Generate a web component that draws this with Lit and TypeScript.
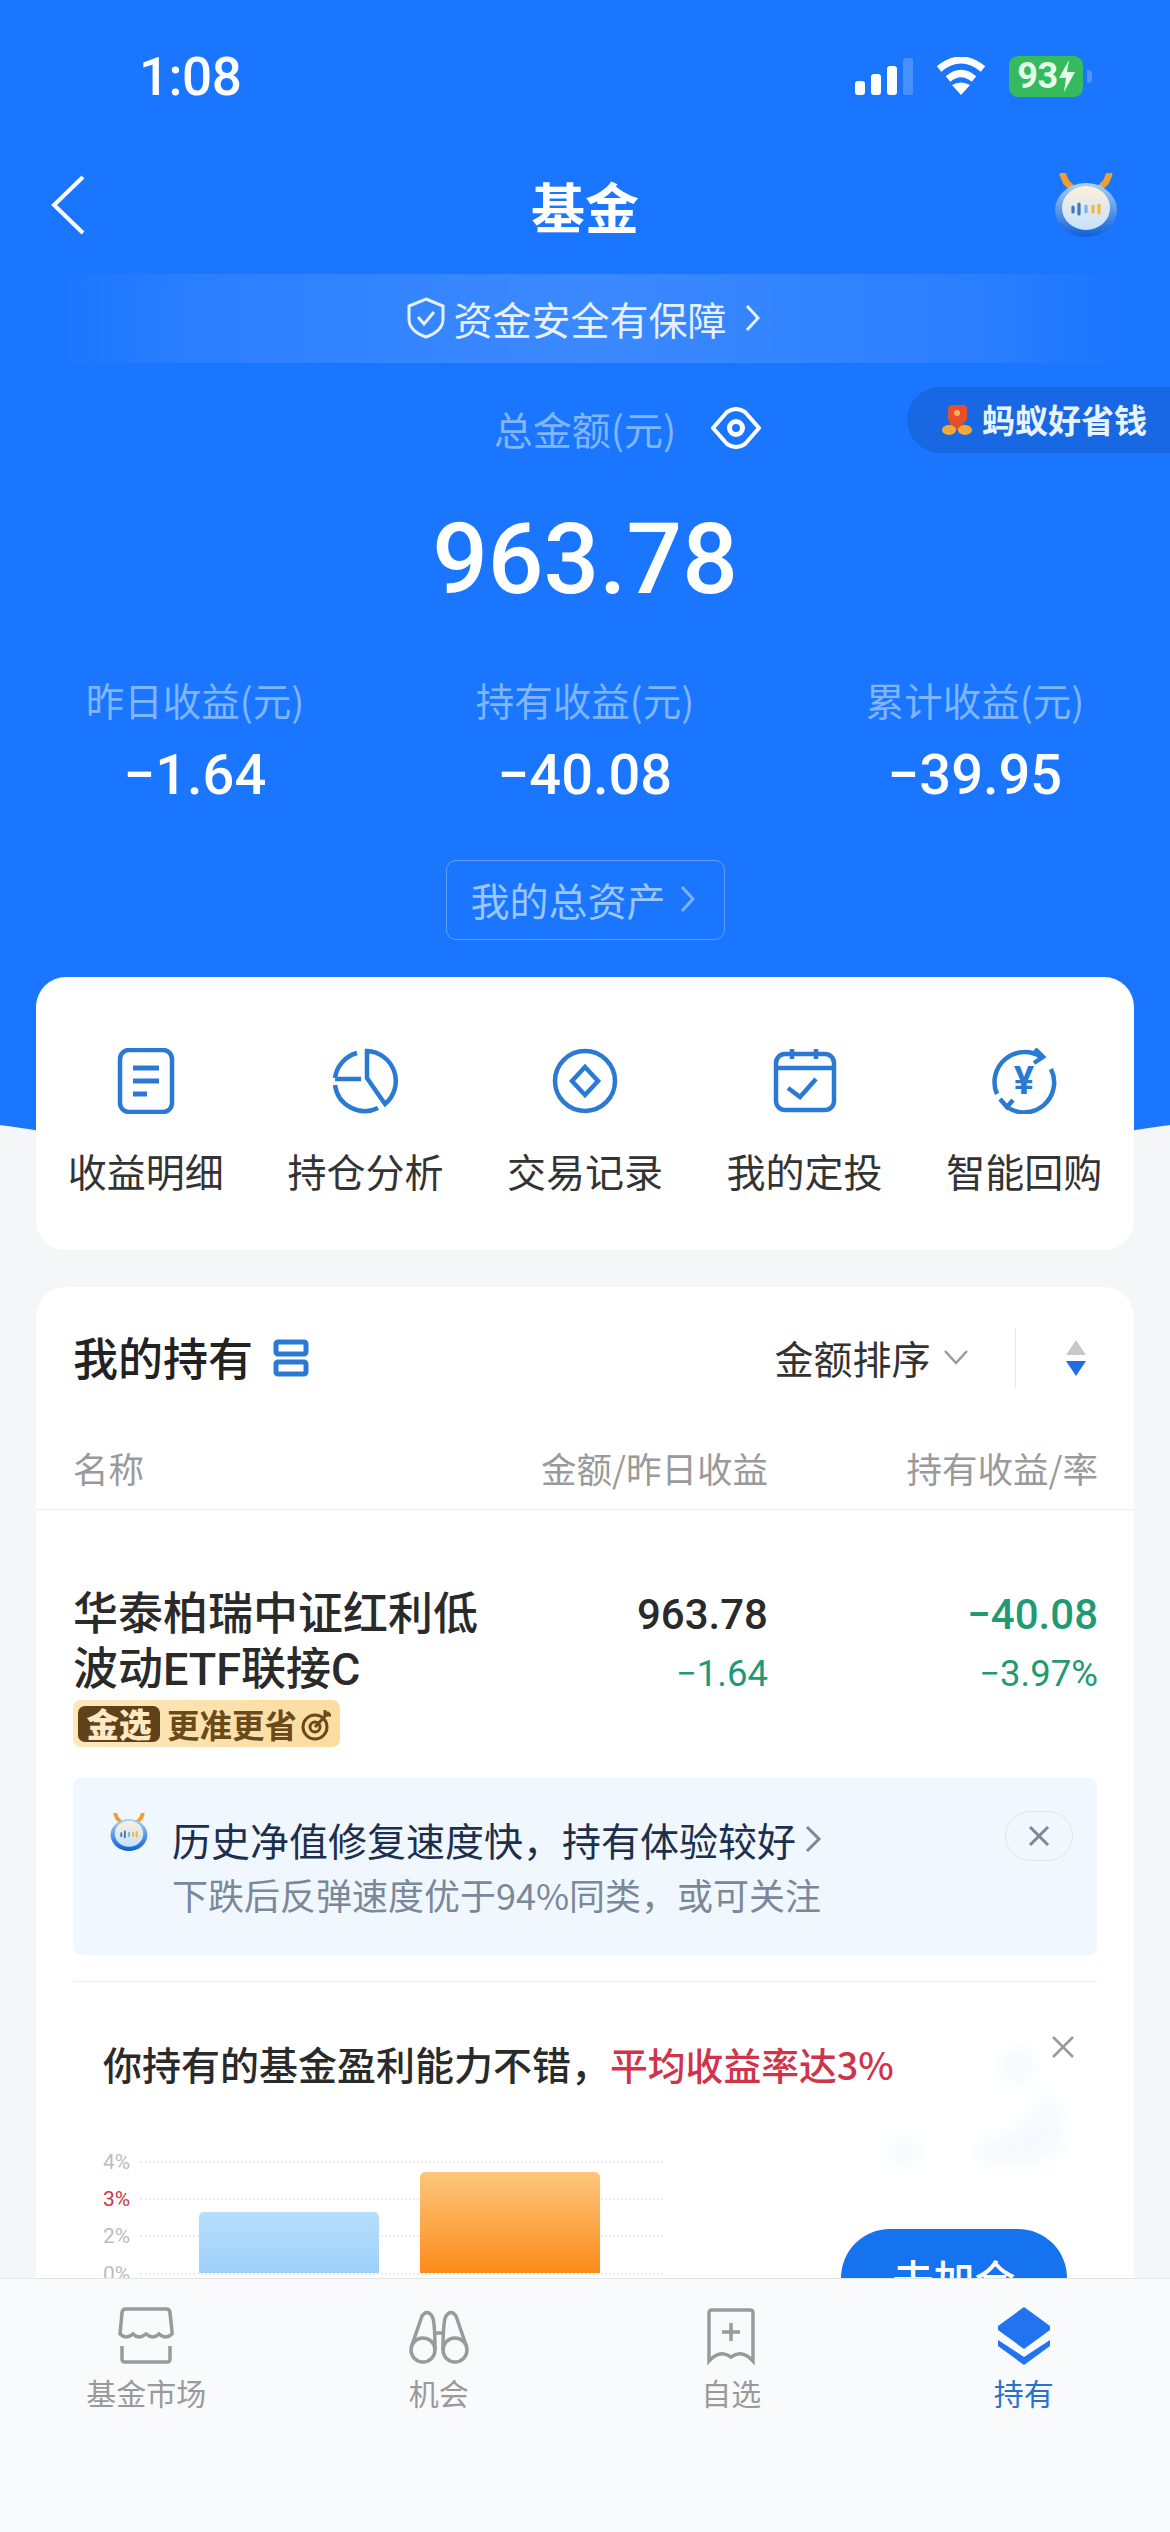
import { LitElement, css, html, svg } from "lit";
import { customElement } from "lit/decorators.js";

const robot = (size: number) => html`<svg width=${size} height=${size} viewBox="0 0 64 64">
  <defs>
    <linearGradient id="rb" x1="0" y1="0" x2="0" y2="1">
      <stop offset="0" stop-color="#a9d4f8" /><stop offset="1" stop-color="#0d5fd6" />
    </linearGradient>
    <linearGradient id="rf" x1="0" y1="0" x2="0" y2="1">
      <stop offset="0" stop-color="#fdf0dc" /><stop offset="1" stop-color="#c5e2fb" />
    </linearGradient>
  </defs>
  <path d="M9 2L12 9L19 16M55 2L52 9L45 16" fill="none" stroke="#f0a030" stroke-width="6.5" stroke-linecap="round" />
  <ellipse cx="32" cy="37" rx="31" ry="27" fill="url(#rb)" />
  <ellipse cx="32" cy="35" rx="24" ry="22" fill="url(#rf)" />
  <g stroke-width="3.2" stroke-linecap="round">
    <path d="M19 34v5M25 31v10" stroke="#3a78c8" />
    <path d="M32 33v6" stroke="#7ab4e6" />
    <path d="M39 33v6M45 32v8" stroke="#f0b648" />
  </g>
</svg>`;

const featureIcons = [
  svg`<rect x="7" y="2" width="52" height="62" rx="9" /><path d="M20 20h26M20 33h26M20 46h14" stroke-width="5" />`,
  svg`<path d="M35 3A30 30 0 0 1 53 56L35 30Z" /><path d="M3 30A30 30 0 0 1 25 5M3 31H29" /><path d="M3 37A30 30 0 0 0 46 60" />`,
  svg`<circle cx="33" cy="33" r="30" /><path d="M33 19L46 33L33 47L20 33Z" />`,
  svg`<rect x="4" y="6" width="58" height="56" rx="9" /><path d="M4 20H62M20 1V11M44 1V11M16 40L28 49L44 31" />`,
  svg`<path d="M50 9A30 30 0 0 0 6 46M16 59A30 30 0 0 0 60 21" /><path d="M44 1L52 9L43 15M9 51L16 59L22 52" /><text x="33" y="46" text-anchor="middle" font-size="38" font-weight="700" fill="#2a7ad3" stroke="none" font-family="Roboto, sans-serif">¥</text>`,
];
const features = ["收益明细", "持仓分析", "交易记录", "我的定投", "智能回购"];

const tabIcons = [
  html`<svg width="56" height="58" viewBox="0 0 56 58"><path d="M8 2H48Q52 2 52 6L54 24Q54 27 54 27Q48 33 41 27Q35 33 28 27Q21 33 15 27Q8 33 2 27L4 6Q4 2 8 2Z" /><path d="M4 39V52Q4 55 7 55H49Q52 55 52 52V39" /></svg>`,
  html`<svg width="60" height="58" viewBox="0 0 60 58"><circle cx="14" cy="43" r="12" /><circle cx="46" cy="43" r="12" /><path d="M3 38L13 9Q18 2 23 9Q26 14 26 43M57 38L47 9Q42 2 37 9Q34 14 34 43M26 26H34" /></svg>`,
  html`<svg width="50" height="58" viewBox="0 0 50 58"><path d="M6 3H44Q47 3 47 6V54Q36 42 25 50Q14 42 3 54V6Q3 3 6 3Z" /><path d="M25 16V34M16 25H34" /></svg>`,
  html`<svg width="52" height="58" viewBox="0 0 52 58" style="stroke:none"><path d="M26 0L52 19V23L26 42L0 23V19Z" fill="#2273f0" /><path d="M0 33L26 50L52 33V39L26 58L0 39Z" fill="#2273f0" /></svg>`,
];
const tabs = ["基金市场", "机会", "自选", "持有"];

@customElement("app-root")
export class AppRoot extends LitElement {
  static styles = css`
    :host {
      display: block;
      position: relative;
      width: 1170px;
      height: 2532px;
      overflow: hidden;
      background: #f5f6f7;
      font-family: "Noto Sans CJK SC", Roboto, sans-serif;
      color: #333;
    }
    .num {
      font-family: Roboto, "Noto Sans CJK SC", sans-serif;
    }
    .hero-bg {
      position: absolute;
      top: 0;
      left: -234px;
      width: 1638px;
      height: 1163px;
      background: #1a75ff;
      border-radius: 0 0 819px 819px / 0 0 127px 127px;
    }
    .page {
      position: relative;
    }
    .status {
      height: 152px;
      display: flex;
      align-items: center;
      justify-content: space-between;
      padding: 0 87px 0 139px;
      color: #fff;
    }
    .time {
      font-size: 53px;
      font-weight: 500;
      letter-spacing: -0.5px;
      margin-top: 2px;
    }
    .status-icons {
      display: flex;
      align-items: center;
      gap: 23px;
    }
    .battery {
      position: relative;
      width: 74px;
      height: 41px;
      background: #35bb5e;
      border-radius: 9px;
      display: flex;
      align-items: center;
      justify-content: center;
      gap: 1px;
      font-size: 36px;
      font-weight: 700;
      letter-spacing: -0.5px;
      color: #e6ffe9;
    }
    .battery::after {
      content: "";
      position: absolute;
      left: 78px;
      top: 14px;
      width: 5px;
      height: 13px;
      border-radius: 0 4px 4px 0;
      background: #4f95f9;
    }
    .nav {
      height: 106px;
      display: flex;
      align-items: center;
      justify-content: space-between;
      padding: 0 52px 0 50px;
      position: relative;
    }
    .nav-title {
      position: absolute;
      left: 0;
      right: 0;
      text-align: center;
      font-size: 54px;
      font-weight: 700;
      color: #fff;
    }
    .nav-robot {
      display: flex;
    }
    .guard {
      margin-top: 16px;
      height: 89px;
      box-sizing: border-box;
      padding-bottom: 2px;
      display: flex;
      align-items: center;
      justify-content: center;
      gap: 8px;
      color: #e6f0ff;
      font-size: 39px;
      background: linear-gradient(90deg, rgba(255, 255, 255, 0) 4%, rgba(255, 255, 255, 0.07) 16%, rgba(255, 255, 255, 0.15) 50%, rgba(255, 255, 255, 0.07) 84%, rgba(255, 255, 255, 0) 97%);
    }
    .save-tag {
      position: absolute;
      top: 387px;
      right: 0;
      width: 263px;
      height: 66px;
      box-sizing: border-box;
      padding: 0 0 2px 35px;
      display: flex;
      align-items: center;
      gap: 10px;
      border-radius: 33px 0 0 33px;
      background: #1868e4;
      color: #e9f3ff;
      font-size: 33px;
      font-weight: 700;
    }
    .summary {
      padding-top: 42px;
      text-align: center;
    }
    .total-label {
      height: 45px;
      display: flex;
      align-items: center;
      justify-content: center;
      gap: 34px;
      font-size: 39px;
      color: #80b6ff;
      padding-left: 86px;
    }
    .total {
      margin-top: 55px;
      height: 110px;
      line-height: 110px;
      font-size: 98px;
      font-weight: 500;
      color: #fff;
    }
    .stats {
      margin-top: 64px;
      display: grid;
      grid-template-columns: 390px 390px 390px;
    }
    .stat-label {
      height: 40px;
      line-height: 40px;
      font-size: 38.5px;
      color: #80b6ff;
    }
    .stat-value {
      margin-top: 23px;
      height: 66px;
      line-height: 66px;
      font-size: 56px;
      font-weight: 500;
      color: #fff;
    }
    .assets {
      margin: 52px auto 0;
      width: 279px;
      height: 80px;
      box-sizing: border-box;
      border: 1.5px solid rgba(255, 255, 255, 0.3);
      border-radius: 10px;
      display: flex;
      align-items: center;
      justify-content: center;
      gap: 14px;
      padding: 0 4px 2px 0;
      font-size: 39px;
      color: #9cc6ff;
    }
    .card {
      margin: 37px 36px 0;
      background: #fff;
      border-radius: 30px;
    }
    .features {
      height: 273px;
      box-sizing: border-box;
      padding-top: 71px;
      display: grid;
      grid-template-columns: repeat(5, 1fr);
    }
    .feature {
      display: flex;
      flex-direction: column;
      align-items: center;
      font-size: 39px;
      color: #333;
    }
    .feature svg {
      fill: none;
      stroke: #2a7ad3;
      stroke-width: 4.5;
    }
    .feature span {
      margin-top: 34px;
      line-height: 44px;
    }
    .holdings-head {
      height: 142px;
      display: flex;
      align-items: center;
      padding: 0 46px 0 37px;
    }
    .holdings-title {
      font-size: 45px;
      font-weight: 500;
      color: #222;
      margin: 0 20px 4px 0;
    }
    .sort {
      margin-left: auto;
      display: flex;
      align-items: center;
      gap: 12px;
      padding-bottom: 3px;
      font-size: 39px;
      color: #333;
    }
    .sort-divider {
      width: 1.5px;
      height: 60px;
      background: #e8e8e8;
      margin: 0 48px 0 46px;
    }
    .columns,
    .row {
      display: grid;
      grid-template-columns: minmax(0, 1fr) 300px 330px;
      padding: 0 36px 0 37px;
    }
    .columns {
      height: 80px;
      align-items: center;
      border-bottom: 1.5px solid #eeeeee;
      font-size: 35.5px;
      color: #9a9a9a;
    }
    .columns div {
      padding-bottom: 4px;
    }
    .columns div:not(:first-child),
    .cell {
      text-align: right;
    }
    .row {
      padding-top: 77px;
    }
    .name {
      font-family: Roboto, "Noto Sans CJK SC", sans-serif;
      font-size: 45px;
      line-height: 55px;
      font-weight: 500;
      color: #2a2a2a;
      white-space: nowrap;
    }
    .cell-main {
      font-size: 42px;
      font-weight: 500;
      line-height: 55px;
      color: #2a2a2a;
    }
    .cell-sub {
      margin-top: 8px;
      font-size: 36.5px;
      line-height: 47px;
      color: #1f9a74;
    }
    .green {
      color: #1f9a74;
    }
    .gold {
      margin: 3px 0 0 37px;
      width: 267px;
      height: 47px;
      box-sizing: border-box;
      padding-left: 5px;
      display: flex;
      align-items: center;
      border-radius: 8px;
      background: linear-gradient(90deg, #fde7bb, #fbdca0);
      font-size: 32.5px;
      font-weight: 700;
      color: #6b4a1a;
      white-space: nowrap;
    }
    .gold b {
      width: 82px;
      height: 36px;
      line-height: 34px;
      text-align: center;
      margin-right: 7px;
      font-size: 32.5px;
      background: #5f421a;
      color: #ffe9c4;
      border-radius: 7px;
    }
    .gold svg {
      margin-left: 4px;
    }
    .tip {
      margin: 31px 37px 0;
      height: 177px;
      box-sizing: border-box;
      padding: 35px 24px 0 37px;
      display: flex;
      gap: 24px;
      background: #f0f7fe;
      border-radius: 8px;
    }
    .tip-title {
      display: flex;
      align-items: center;
      gap: 8px;
      font-size: 39px;
      line-height: 52px;
      color: #1c2f4d;
    }
    .tip-sub {
      margin-top: 7px;
      font-size: 36px;
      line-height: 44px;
      color: #7b8899;
    }
    .tip-close {
      margin-left: auto;
      width: 68px;
      height: 50px;
      margin-top: -2px;
      box-sizing: border-box;
      border: 1.5px solid #dde6ee;
      border-radius: 25px;
      display: flex;
      align-items: center;
      justify-content: center;
    }
    .promo {
      position: relative;
      margin: 26px 37px 0;
      padding: 56px 30px 0;
      border-top: 1.5px solid #eeeeee;
    }
    .promo-title {
      position: relative;
      font-size: 39px;
      line-height: 50px;
      font-weight: 500;
      color: #2a2a2a;
      white-space: nowrap;
    }
    .red {
      color: #d0344a;
    }
    .promo-title .red {
      font-size: 37.8px;
    }
    .promo-x {
      position: absolute;
      top: 53px;
      right: 22px;
    }
    .promo-art {
      position: absolute;
      top: 60px;
      right: 10px;
    }
    .promo-body {
      position: relative;
      margin-top: 54px;
      display: flex;
      justify-content: space-between;
    }
    .chart {
      width: 560px;
    }
    .plot {
      position: relative;
    }
    .grid-row {
      height: 37.3px;
      display: flex;
      align-items: center;
      gap: 10px;
      font-size: 21px;
      color: #bdbdbd;
    }
    .grid-row i {
      flex: 1;
      border-top: 2px dotted #ececec;
    }
    .bars {
      position: absolute;
      left: 96px;
      bottom: 19px;
      display: flex;
      align-items: flex-end;
      gap: 41px;
    }
    .bar {
      width: 180px;
      border-radius: 5px 5px 0 0;
    }
    .bar-a {
      height: 61px;
      background: linear-gradient(#b6defc, #9fd0fa);
    }
    .bar-b {
      height: 101px;
      background: linear-gradient(#fdc67c, #fc8c1a);
    }
    .bar-labels {
      display: flex;
      gap: 41px;
      margin: -20px 0 0 96px;
      font-size: 26px;
      color: #888;
      text-align: center;
    }
    .bar-labels span {
      width: 180px;
    }
    .go {
      margin: 86px 0 0;
      width: 226px;
      height: 98px;
      border-radius: 49px;
      background: #1673f0;
      color: #fff;
      font-size: 41px;
      font-weight: 500;
      text-align: center;
      line-height: 96px;
    }
    .tabbar {
      position: absolute;
      left: 0;
      right: 0;
      bottom: 0;
      height: 254px;
      box-sizing: border-box;
      padding-top: 28px;
      display: grid;
      grid-template-columns: repeat(4, 1fr);
      align-items: start;
      background: #f9fafc;
      border-top: 1.5px solid #e4e4e4;
    }
    .tab {
      display: flex;
      flex-direction: column;
      align-items: center;
      font-size: 30px;
      color: #9a9a9a;
    }
    .tab svg {
      fill: none;
      stroke: #9a9a9a;
      stroke-width: 3.5;
    }
    .tab span {
      margin-top: 7px;
      line-height: 40px;
    }
    .tab.active {
      color: #2a72c8;
    }
  `;

  render() {
    return html`
      <div class="hero-bg"></div>
      <div class="page">
        <div class="status">
          <span class="time num">1:08</span>
          <div class="status-icons">
            <svg width="58" height="37" viewBox="0 0 58 37" fill="#fff">
              <rect x="0" y="23" width="10" height="14" rx="3" />
              <rect x="16" y="16" width="10" height="21" rx="3" />
              <rect x="32" y="8" width="10" height="29" rx="3" />
              <rect x="48" y="0" width="10" height="37" rx="2" opacity=".2" />
            </svg>
            <svg width="50" height="38" viewBox="0 0 50 38" fill="none" stroke="#fff" stroke-width="7">
              <path d="M3 12Q25 -6 47 12" />
              <path d="M12 22Q25 11 38 22" />
              <path d="M25 38L16 28Q25 23 34 28Z" fill="#fff" stroke="none" />
            </svg>
            <div class="battery num">93<svg width="16" height="32" viewBox="0 0 16 32"><path d="M10 0L0 18H7L5 32L16 12H8Z" fill="#e6ffe9" /></svg></div>
          </div>
        </div>
        <div class="nav">
          <svg width="36" height="60" viewBox="0 0 36 60" fill="none" stroke="#fff" stroke-width="4"><path d="M33 2L4 30L33 58" /></svg>
          <div class="nav-title">基金</div>
          <div class="nav-robot">${robot(64)}</div>
        </div>
        <div class="guard">
          <svg width="38" height="42" viewBox="0 0 38 42" fill="none" stroke="#e6f0ff" stroke-width="3"><path d="M19 2L36 9V22Q36 34 19 40Q2 34 2 22V9Z" /><path d="M11 20L17 27L27 15" /></svg>
          <span>资金安全有保障</span>
          <svg width="20" height="30" viewBox="0 0 20 30" fill="none" stroke="#e6f0ff" stroke-width="3" style="margin-left:8px"><path d="M4 3L15 15L4 27" /></svg>
        </div>
        <div class="save-tag">
          <svg width="30" height="32" viewBox="0 0 30 32">
            <path d="M8 18H22V27H8Z" fill="#d9502a" />
            <rect x="6" y="2" width="19" height="17" rx="4" fill="#e8502c" />
            <circle cx="15" cy="10" r="3" fill="#ffb35a" />
            <ellipse cx="7" cy="27" rx="7" ry="5" fill="#f3a83a" />
            <ellipse cx="23" cy="27" rx="7" ry="5" fill="#f3a83a" />
          </svg>
          <span>蚂蚁好省钱</span>
        </div>
        <div class="summary">
          <div class="total-label">
            <span>总金额(元)</span>
            <svg width="52" height="42" viewBox="0 0 52 42" fill="none" stroke="#fff" stroke-width="4"><path d="M3 21L17 5Q26 -1 35 5L49 21L35 37Q26 43 17 37Z" stroke-linejoin="round" /><circle cx="26" cy="21" r="6.5" stroke-width="5" /></svg>
          </div>
          <div class="total num">963.78</div>
          <div class="stats">
            <div><div class="stat-label">昨日收益(元)</div><div class="stat-value num">−1.64</div></div>
            <div><div class="stat-label">持有收益(元)</div><div class="stat-value num">−40.08</div></div>
            <div><div class="stat-label">累计收益(元)</div><div class="stat-value num">−39.95</div></div>
          </div>
          <div class="assets">
            <span>我的总资产</span>
            <svg width="16" height="28" viewBox="0 0 16 28" fill="none" stroke="#7fb2fb" stroke-width="3"><path d="M2 2L13 14L2 26" /></svg>
          </div>
        </div>
        <div class="card features">
          ${features.map(
            (f, i) => html`<div class="feature">
              <svg width="66" height="66" viewBox="0 0 66 66">${featureIcons[i]}</svg>
              <span>${f}</span>
            </div>`
          )}
        </div>
        <div class="card">
          <div class="holdings-head">
            <span class="holdings-title">我的持有</span>
            <svg width="36" height="38" viewBox="0 0 36 38" fill="none" stroke="#2a7ad3" stroke-width="5"><rect x="3" y="3" width="30" height="12" rx="2" /><rect x="3" y="23" width="30" height="12" rx="2" /></svg>
            <div class="sort">
              <span>金额排序</span>
              <svg width="26" height="16" viewBox="0 0 26 16" fill="none" stroke="#999" stroke-width="2.5"><path d="M2 2L13 14L24 2" /></svg>
            </div>
            <div class="sort-divider"></div>
            <svg width="24" height="40" viewBox="0 0 24 40"><path d="M12 2L22 17H2Z" fill="#c8c8c8" /><path d="M12 38L22 23H2Z" fill="#1f6fe0" /></svg>
          </div>
          <div class="columns">
            <div>名称</div>
            <div>金额/昨日收益</div>
            <div>持有收益/率</div>
          </div>
          <div class="row">
            <div class="name">华泰柏瑞中证红利低<br />波动ETF联接C</div>
            <div class="cell num">
              <div class="cell-main">963.78</div>
              <div class="cell-sub">−1.64</div>
            </div>
            <div class="cell num">
              <div class="cell-main green">−40.08</div>
              <div class="cell-sub">−3.97%</div>
            </div>
          </div>
          <div class="gold">
            <b>金选</b>更准更省
            <svg width="32" height="34" viewBox="0 0 32 34" fill="none" stroke="#6b4a1a" stroke-width="3"><circle cx="14" cy="20" r="12" /><circle cx="14" cy="20" r="5" /><path d="M14 20L28 5M24 3V8H30" /></svg>
          </div>
          <div class="tip">
            ${robot(38)}
            <div>
              <div class="tip-title">
                历史净值修复速度快，持有体验较好
                <svg width="18" height="30" viewBox="0 0 18 30" fill="none" stroke="#7b8899" stroke-width="3"><path d="M3 3L15 15L3 27" /></svg>
              </div>
              <div class="tip-sub">下跌后反弹速度优于94%同类，或可关注</div>
            </div>
            <div class="tip-close">
              <svg width="24" height="24" viewBox="0 0 24 24" stroke="#7b8899" stroke-width="3"><path d="M3 3L21 21M21 3L3 21" /></svg>
            </div>
          </div>
          <div class="promo">
            <svg class="promo-art" width="240" height="170" viewBox="0 0 240 170" fill="#f5f9fd">
              <defs><filter id="soft"><feGaussianBlur stdDeviation="8" /></filter></defs>
              <g filter="url(#soft)">
                <circle cx="171" cy="24" r="18" />
                <path d="M195 48Q225 70 215 105Q190 130 140 122Q115 105 150 95Q185 85 195 48Z" />
                <ellipse cx="56" cy="110" rx="18" ry="13" />
              </g>
            </svg>
            <svg class="promo-x" width="24" height="24" viewBox="0 0 24 24" stroke="#999" stroke-width="2.5"><path d="M2 2L22 22M22 2L2 22" /></svg>
            <div class="promo-title">你持有的基金盈利能力不错，<span class="red">平均收益率达3%</span></div>
            <div class="promo-body">
              <div class="chart">
                <div class="plot">
                  <div class="grid-row num"><span>4%</span><i></i></div>
                  <div class="grid-row num"><span class="red">3%</span><i></i></div>
                  <div class="grid-row num"><span>2%</span><i></i></div>
                  <div class="grid-row num"><span>0%</span><i></i></div>
                  <div class="bars">
                    <div class="bar bar-a"></div>
                    <div class="bar bar-b"></div>
                  </div>
                </div>
                <div class="bar-labels"><span>同类平均</span><span>达人</span></div>
              </div>
              <div class="go">去加仓</div>
            </div>
          </div>
        </div>
      </div>
      <div class="tabbar">
        ${tabs.map(
          (t, i) => html`<div class="tab ${i === 3 ? "active" : ""}">
            ${tabIcons[i]}
            <span>${t}</span>
          </div>`
        )}
      </div>
    `;
  }
}
